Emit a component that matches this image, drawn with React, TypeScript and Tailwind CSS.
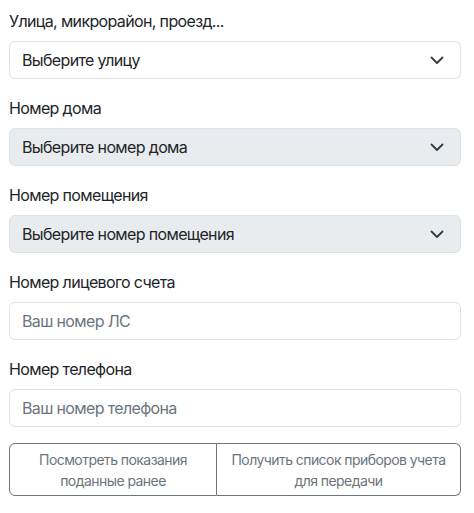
type SelectFieldProps = {
  label: string;
  placeholder: string;
  disabled?: boolean;
};

function Chevron() {
  return (
    <svg viewBox="0 0 16 16" className="h-4 w-4 shrink-0" fill="none">
      <path d="m2.5 5.5 5.5 5.5 5.5-5.5" stroke="#343a40" strokeWidth="1.8" strokeLinecap="round" strokeLinejoin="round" />
    </svg>
  );
}

function SelectField({ label, placeholder, disabled }: SelectFieldProps) {
  return (
    <div className="mb-[17px]">
      <label className="mb-2 block h-6 leading-6">{label}</label>
      <div
        className={`flex h-[38px] items-center justify-between rounded-[6px] border border-[#dee2e6] pl-[12px] pr-[15px] ${
          disabled ? "bg-[#e9ecef]" : "bg-white"
        }`}
      >
        <span className="text-[#212529]">{placeholder}</span>
        <Chevron />
      </div>
    </div>
  );
}

function InputField({ label, placeholder }: { label: string; placeholder: string }) {
  return (
    <div className="mb-[17px]">
      <label className="mb-2 block h-6 leading-6">{label}</label>
      <input
        placeholder={placeholder}
        className="block h-[38px] w-full rounded-[6px] border border-[#dee2e6] bg-white px-[12px] tracking-[-0.04em] text-[#212529] outline-none placeholder:text-[#6c757d]"
      />
    </div>
  );
}

export default function App() {
  return (
    <main className="min-h-screen bg-white pl-[9px] pr-[13px] pt-[9px] text-[16px] tracking-[-0.04em] text-[#212529] [font-family:Inter,'Noto_Sans',sans-serif]">
      <SelectField label="Улица, микрорайон, проезд..." placeholder="Выберите улицу" />
      <SelectField label="Номер дома" placeholder="Выберите номер дома" disabled />
      <SelectField label="Номер помещения" placeholder="Выберите номер помещения" disabled />
      <InputField label="Номер лицевого счета" placeholder="Ваш номер ЛС" />
      <InputField label="Номер телефона" placeholder="Ваш номер телефона" />
      <div className="-mt-[1px] flex h-[53px] text-[14px] leading-[21px] tracking-[-0.04em] text-[#6c757d]">
        <button className="w-[208px] rounded-l-[6px] border border-[#6c757d] px-3 text-center">
          Посмотреть показания поданные ранее
        </button>
        <button className="flex-1 rounded-r-[6px] border border-l-0 border-[#6c757d] px-2 text-center">
          Получить список приборов учета для передачи
        </button>
      </div>
    </main>
  );
}
